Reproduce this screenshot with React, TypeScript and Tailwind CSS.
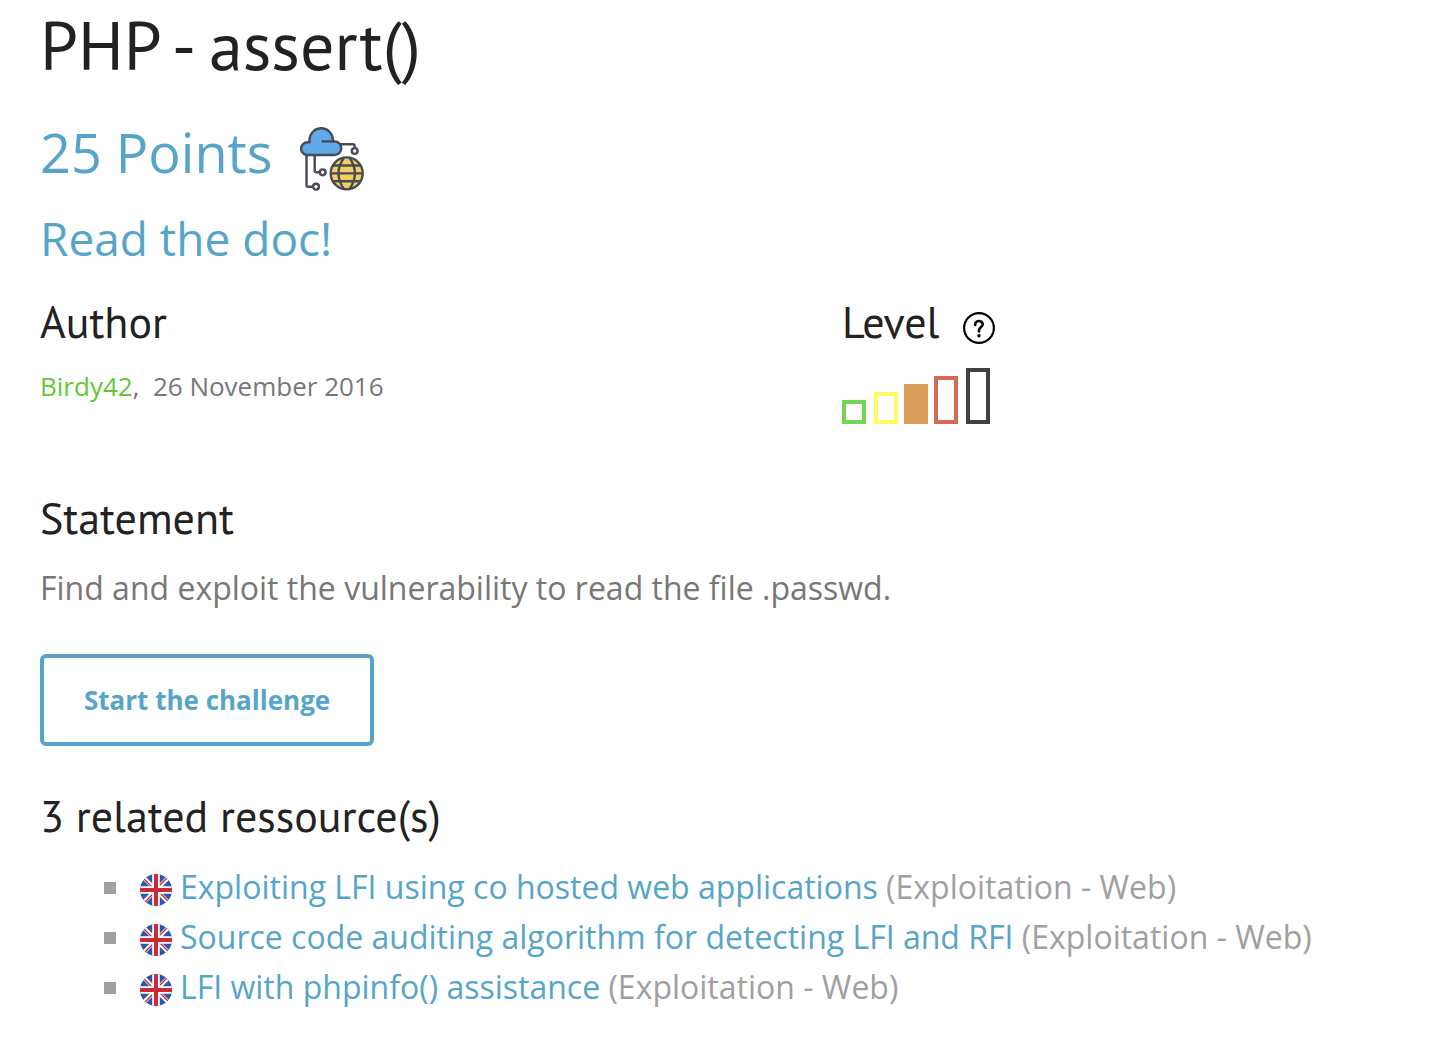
import React from "react";

const headingFont = "font-['PT_Sans',Lato,sans-serif] text-[#222222]";

const levels = [
  { name: "Very easy", className: "h-6 border-[#73d654]" },
  { name: "Easy", className: "ml-2 h-8 border-[#fffb62]" },
  { name: "Medium", className: "ml-1.5 h-10 border-[#dc9f5b] bg-[#dc9f5b]" },
  { name: "Hard", className: "ml-1.5 h-12 border-[#d96854]" },
  { name: "Very hard", className: "ml-2 h-14 border-[#404040]" },
];

const resources = [
  "Exploiting LFI using co hosted web applications",
  "Source code auditing algorithm for detecting LFI and RFI",
  "LFI with phpinfo() assistance",
];

const CloudIcon: React.FC = () => (
  <svg
    viewBox="0 0 64 64"
    className="mt-3.5 size-16"
    fill="none"
    stroke="#474c54"
    strokeWidth="2.4"
    strokeLinejoin="round"
    aria-hidden="true"
  >
    <path d="M6.5 28v30q0 1.7 1.7 1.7H13M14.7 28v15.6q0 1.7 1.7 1.7h3.3M40 17.3h12.5q2.2 0 2.2 2.2V21" />
    <circle cx="16" cy="59.7" r="2.9" />
    <circle cx="22.7" cy="45.3" r="2.9" />
    <circle cx="54.7" cy="24" r="2.9" />
    <path
      d="M7.5 28a6.3 6.3 0 0 1 0-12.8h2V13a11.7 11.7 0 0 1 23.4 0v1.4h1.6a6.8 6.8 0 0 1 0 13.6z"
      fill="#61a8e8"
    />
    <path d="M21.5 14.4h13" />
    <circle cx="46.7" cy="46.4" r="16" fill="#f3cf62" />
    <path d="M33 38.5h27.4M30.7 46.4h32M33 54.3h27.4M43.7 31q-10.500 15.400 0 30.800M49.700 31q10.500 15.400 0 30.800" />
  </svg>
);

const HelpIcon: React.FC = () => (
  <svg viewBox="0 0 32 32" className="size-8" fill="none" stroke="#000" strokeWidth="2.2" aria-hidden="true">
    <circle cx="16" cy="16" r="14.9" />
    <path
      d="M12.2 13v-.7a3.8 3.3 0 0 1 7.6 0c0 2.6-3.8 2.9-3.8 6.2v1"
      strokeWidth="2.6"
      strokeLinecap="round"
    />
    <circle cx="16" cy="23.8" r="1.7" fill="#000" stroke="none" />
  </svg>
);

const FlagIcon: React.FC<{ id: string }> = ({ id }) => (
  <svg viewBox="0 0 32 32" className="mt-1.5 size-8 shrink-0" role="img" aria-label="English">
    <clipPath id={id}>
      <circle cx="16" cy="16" r="16" />
    </clipPath>
    <g clipPath={`url(#${id})`}>
      <path d="M0 0h32v32H0z" fill="#2a56b0" />
      <path d="M3 3l26 26M29 3L3 29" stroke="#fff" strokeWidth="4" />
      <path d="M3 4l10 10M19 18l10 10M28 3L18 13M14 19L4 29" stroke="#cb2a34" strokeWidth="1.4" />
      <path d="M16 0v32M0 16h32" stroke="#fff" strokeWidth="7.6" />
      <path d="M16 0v32M0 16h32" stroke="#cb2a34" strokeWidth="4" />
    </g>
  </svg>
);

const App: React.FC = () => {
  return (
    <main className="min-h-screen bg-white px-10 pb-12 font-['Open_Sans',sans-serif] text-[#777777]">
      <h1 className={`pt-px text-[68px] leading-[88px] ${headingFont}`}>
        PHP - assert()
      </h1>

      <div className="mt-6 flex items-center gap-7 text-[#56a5c8]">
        <h2 className="text-[54px] leading-[76px]">25 Points</h2>
        <CloudIcon />
      </div>
      <h3 className="mt-3.5 text-[46px] leading-[66px] text-[#56a5c8]">
        Read the doc!
      </h3>

      <div className="mt-[15px] grid grid-cols-[802fr_550fr]">
        <section>
          <h4 className={`text-[44px] leading-[72px] ${headingFont}`}>Author</h4>
          <p className="mt-2 text-[26px] leading-10">
            <a href="#author" className="text-[#5fc936]">
              Birdy42
            </a>
            ,&nbsp; 26 November 2016
          </p>
        </section>
        <section>
          <div className="flex items-center gap-6">
            <h4 className={`text-[44px] leading-[72px] ${headingFont}`}>Level</h4>
            <button type="button" aria-label="About levels" className="mt-3">
              <HelpIcon />
            </button>
          </div>
          <div className="mt-2.5 flex items-end" role="img" aria-label="Medium">
            {levels.map((level) => (
              <span key={level.name} className={`w-6 border-4 ${level.className}`} />
            ))}
          </div>
        </section>
      </div>

      <section className="mt-[58px]">
        <h4 className={`text-[44px] leading-[72px] ${headingFont}`}>Statement</h4>
        <p className="mt-2 text-[32px] leading-[52px]">
          Find and exploit the vulnerability to read the file .passwd.
        </p>
        <button
          type="button"
          className="mt-10 rounded-md border-4 border-[#56a5c8] px-10 py-6 text-[26px] leading-9 font-bold text-[#56a5c8]"
        >
          Start the challenge
        </button>
      </section>

      <section className="mt-[34px]">
        <h4 className={`text-[44px] leading-[72px] ${headingFont}`}>
          3 related ressource(s)
        </h4>
        <ul className="mt-2.5 pl-16 text-[32px] leading-[50px] text-[#a0a0a0]">
          {resources.map((title, i) => (
            <li key={title} className="flex items-center">
              <span className="mt-0.5 mr-6 size-3 bg-[#a0a0a0]" />
              <FlagIcon id={`flag-${i}`} />
              <p className="ml-2">
                <a href="#resource" className="text-[#56a5c8]">
                  {title}
                </a>{" "}
                (Exploitation - Web)
              </p>
            </li>
          ))}
        </ul>
      </section>
    </main>
  );
};

export default App;
